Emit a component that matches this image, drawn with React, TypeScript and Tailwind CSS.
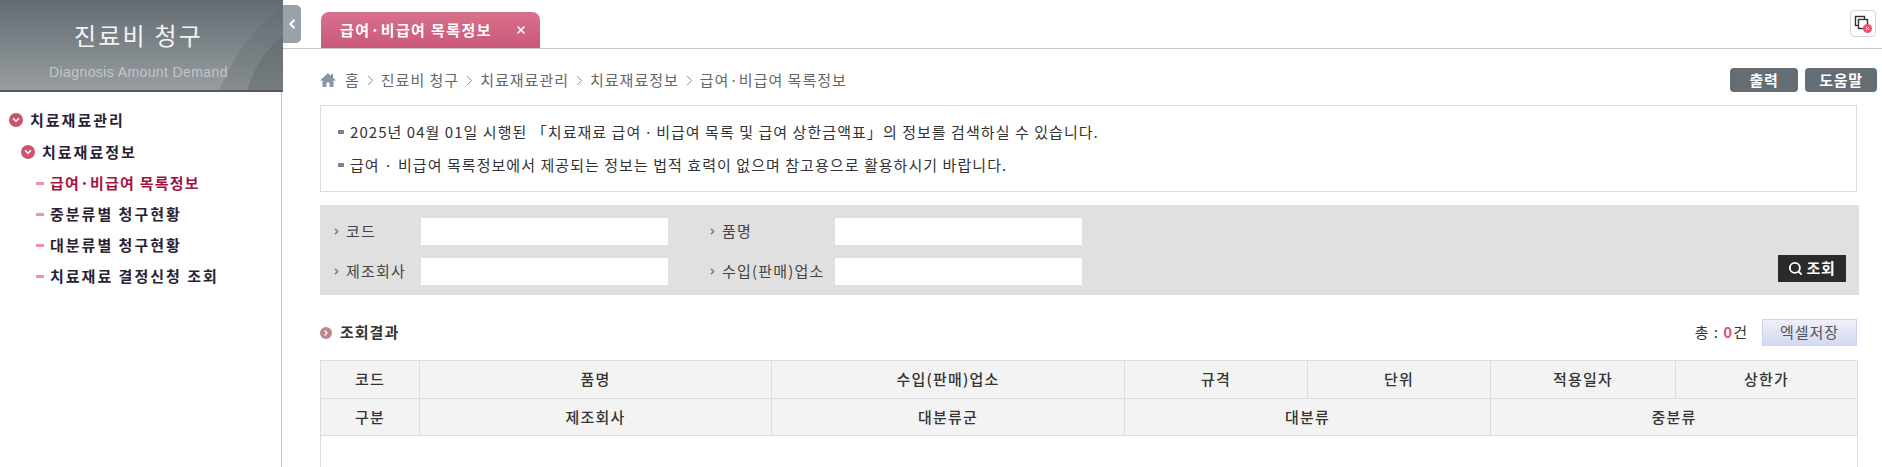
import React from "react";
import { ChevronLeft, ChevronDown, ChevronRight, Search, X } from "lucide-react";

const menuItems = [
  { label: "급여·비급여 목록정보", active: true },
  { label: "중분류별 청구현황", active: false },
  { label: "대분류별 청구현황", active: false },
  { label: "치료재료 결정신청 조회", active: false },
];

const crumbs = ["진료비 청구", "치료재료관리", "치료재료정보", "급여·비급여 목록정보"];

const Bullet: React.FC = () => (
  <span className="flex h-[14px] w-[14px] shrink-0 items-center justify-center rounded-full bg-[#c8566f]">
    <ChevronDown className="h-[10px] w-[10px] text-white" strokeWidth={4} />
  </span>
);

const Field: React.FC<{ label: string; labelWidth: string }> = ({ label, labelWidth }) => (
  <div className="flex items-center">
    <div className={`flex items-center ${labelWidth}`}>
      <ChevronRight className="mr-[5px] h-[9px] w-[9px] text-[#777]" strokeWidth={4} />
      <span className="text-[15px] tracking-[1.2px] text-[#444]">{label}</span>
    </div>
    <div className="h-[27px] w-[247px] bg-white" />
  </div>
);

const App: React.FC = () => {
  return (
    <div className="relative flex h-[467px] w-[1882px] overflow-hidden bg-white font-['Noto_Sans_CJK_KR',sans-serif]">
      <aside className="flex w-[283px] shrink-0 flex-col">
        <div className="relative flex h-[92px] flex-col items-center overflow-hidden border-b-2 border-[#555a5e] bg-gradient-to-b from-[#636c72] to-[#989da0] pr-[6px] pt-[18px]">
          <svg className="absolute right-0 top-0 h-[90px] w-[70px]" viewBox="0 0 70 90" fill="none">
            <path d="M70 8C44 24 24 50 6 90H70Z" fill="#5d666b" fillOpacity="0.3" />
            <path d="M70 36C54 48 42 66 34 90H70Z" fill="#565f64" fillOpacity="0.35" />
          </svg>
          <h1 className="relative text-[24px] leading-[34px] tracking-[2.2px] text-[#f2f3f3]">진료비 청구</h1>
          <p className="relative mt-[12px] font-['Liberation_Sans',sans-serif] text-[14px] leading-[16px] tracking-[0.4px] text-[#c3c7c9]">
            Diagnosis Amount Demand
          </p>
        </div>
        <nav className="w-[282px] flex-1 border-r border-[#c8c8c8] pt-[18px] text-[15px] font-bold tracking-[2px] text-[#2a2233]">
          <div className="flex h-[20px] items-center gap-[7px] pl-[9px]">
            <Bullet />
            <span>치료재료관리</span>
          </div>
          <div className="mt-[12px] flex h-[20px] items-center gap-[7px] pl-[21px]">
            <Bullet />
            <span>치료재료정보</span>
          </div>
          <ul className="mt-[11px] flex flex-col gap-[11px] pl-[36px]">
            {menuItems.map((item) => (
              <li key={item.label} className="flex h-[20px] items-center gap-[6px]">
                <span className="h-[3px] w-[8px] bg-[#f08fae]" />
                <span className={item.active ? "tracking-[1.2px] text-[#a3123f]" : ""}>{item.label}</span>
              </li>
            ))}
          </ul>
        </nav>
      </aside>

      <button className="absolute left-[283px] top-[5px] flex h-[38px] w-[18px] items-center justify-center rounded-r-[5px] bg-[#99a2a8]">
        <ChevronLeft className="h-[14px] w-[14px] text-white" strokeWidth={4} />
      </button>

      <main className="min-w-0 flex-1">
        <div className="flex h-[49px] items-end justify-between border-b border-[#c8c8c8] pl-[38px] pr-[6px]">
          <div className="flex h-[36px] w-[219px] items-center justify-between rounded-t-[8px] bg-gradient-to-b from-[#d9718c] to-[#c9587a] pl-[19px] pr-[13px] text-[15px] font-bold tracking-[1.4px] text-white">
            <span>급여·비급여 목록정보</span>
            <X className="h-[12px] w-[12px]" strokeWidth={3} />
          </div>
          <button className="mb-[11px] flex h-[27px] w-[26px] items-center justify-center rounded-[4px] border border-[#d4d4d4] bg-white">
            <svg width="18" height="18" viewBox="0 0 18 18" fill="none">
              <rect x="1.5" y="1.5" width="9" height="9" stroke="#333" strokeWidth="1.4" />
              <rect x="4.5" y="4.5" width="9" height="9" fill="#fff" stroke="#333" strokeWidth="1.4" />
              <circle cx="13.5" cy="13.5" r="4.5" fill="#ef5468" />
              <path d="M12 12L15 15M15 12L12 15" stroke="#fff" strokeWidth="1" />
            </svg>
          </button>
        </div>

        <div className="pl-[37px] pr-[25px]">
          <div className="flex h-[56px] items-center justify-between pt-[6px]">
            <div className="flex items-center text-[15px] tracking-[1px] text-[#666]">
              <svg className="mr-[9px] h-[16px] w-[16px]" viewBox="0 0 16 16" fill="#8a93a8">
                <path d="M8 1L0 8.5H2.5V15H6.5V10.5H9.5V15H13.5V8.5H16L13 5.7V2H11V3.9Z" />
              </svg>
              <span>홈</span>
              {crumbs.map((crumb) => (
                <React.Fragment key={crumb}>
                  <ChevronRight className="mx-[2px] h-[17px] w-[17px] text-[#777]" strokeWidth={1.2} />
                  <span>{crumb}</span>
                </React.Fragment>
              ))}
            </div>
            <div className="-mr-[20px] flex gap-[7px] text-[15px] font-bold tracking-[0.7px] text-white">
              <button className="h-[24px] w-[68px] rounded-[4px] bg-[#646c74]">출력</button>
              <button className="h-[24px] w-[72px] rounded-[4px] bg-[#646c74]">도움말</button>
            </div>
          </div>

          <div className="flex h-[87px] flex-col justify-center gap-[13px] border border-[#dcdcdc] pl-[17px] text-[15px] leading-[20px] tracking-[1.05px] text-[#333]">
            <p className="flex items-center gap-[6px]">
              <span className="h-[4px] w-[6px] bg-[#7a828a]" />
              2025년 04월 01일 시행된 「치료재료 급여ㆍ비급여 목록 및 급여 상한금액표」의 정보를 검색하실 수 있습니다.
            </p>
            <p className="flex items-center gap-[6px]">
              <span className="h-[4px] w-[6px] bg-[#7a828a]" />
              급여 · 비급여 목록정보에서 제공되는 정보는 법적 효력이 없으며 참고용으로 활용하시기 바랍니다.
            </p>
          </div>

          <div className="-mr-[2px] mt-[13px] flex h-[90px] items-end justify-between bg-[#e0e0e0] pb-[10px] pl-[12px] pr-[13px]">
            <div className="grid grid-cols-[376px_374px] gap-y-[13px]">
              <Field label="코드" labelWidth="w-[89px]" />
              <Field label="품명" labelWidth="w-[127px]" />
              <Field label="제조회사" labelWidth="w-[89px]" />
              <Field label="수입(판매)업소" labelWidth="w-[127px]" />
            </div>
            <button className="mb-[3px] flex h-[27px] w-[68px] items-center justify-center gap-[3px] bg-[#2b2b2b] text-[15px] font-bold tracking-[0.7px] text-white">
              <Search className="h-[15px] w-[15px]" strokeWidth={3} />
              조회
            </button>
          </div>

          <div className="flex h-[65px] items-center justify-between pt-[10px]">
            <div className="flex items-center gap-[8px]">
              <span className="flex h-[12px] w-[12px] items-center justify-center rounded-full bg-[#b98a8c]">
                <ChevronRight className="h-[8px] w-[8px] text-white" strokeWidth={4} />
              </span>
              <span className="text-[15px] font-bold tracking-[1px] text-[#333]">조회결과</span>
            </div>
            <div className="flex items-center gap-[14px] text-[15px] tracking-[1px] text-[#333]">
              <span>
                총 : <b className="text-[#d9577a]">0</b>건
              </span>
              <button className="h-[27px] w-[95px] border border-[#ccd3ec] bg-gradient-to-b from-[#eef0fa] to-[#d3d9f0] text-[#555]">
                엑셀저장
              </button>
            </div>
          </div>

          <table className="w-[1537px] table-fixed border-collapse border border-[#dcdcdc] text-[15px] tracking-[1.2px] text-[#333]">
            <colgroup>
              <col className="w-[99px]" />
              <col className="w-[352px]" />
              <col className="w-[353px]" />
              <col className="w-[183px]" />
              <col className="w-[183px]" />
              <col className="w-[185px]" />
              <col className="w-[182px]" />
            </colgroup>
            <thead className="bg-[#f3f3f3]">
              <tr className="h-[38px]">
                {["코드", "품명", "수입(판매)업소", "규격", "단위", "적용일자", "상한가"].map((h) => (
                  <th key={h} className="border border-[#dcdcdc] font-medium">{h}</th>
                ))}
              </tr>
              <tr className="h-[37px]">
                <th className="border border-[#dcdcdc] font-medium">구분</th>
                <th className="border border-[#dcdcdc] font-medium">제조회사</th>
                <th className="border border-[#dcdcdc] font-medium">대분류군</th>
                <th colSpan={2} className="border border-[#dcdcdc] font-medium">대분류</th>
                <th colSpan={2} className="border border-[#dcdcdc] font-medium">중분류</th>
              </tr>
            </thead>
            <tbody>
              <tr className="h-[40px]">
                <td colSpan={7} />
              </tr>
            </tbody>
          </table>
        </div>
      </main>
    </div>
  );
};

export default App;
